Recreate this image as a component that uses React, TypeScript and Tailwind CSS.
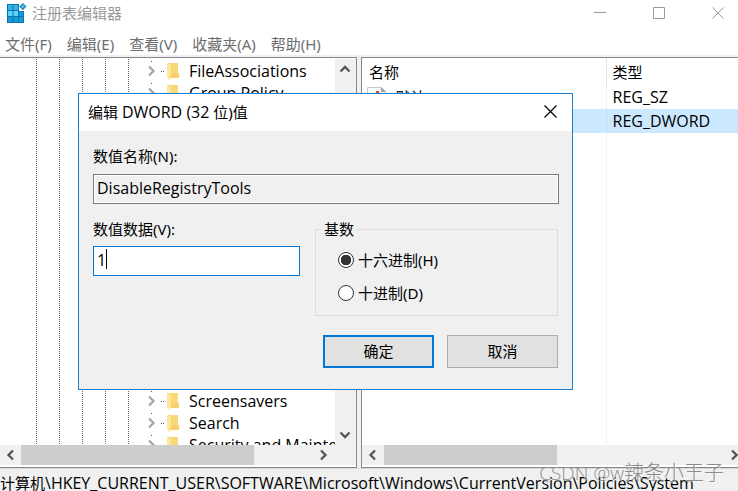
import { useState } from "react";
import type { ReactNode } from "react";

type Direction = "up" | "down" | "left" | "right";

const chevronPaths: Record<Direction, string> = {
  up: "M1.5 7.5 6 3l4.5 4.5",
  down: "M1.5 4.5 6 9l4.5-4.5",
  left: "M8 1.5 3.5 6 8 10.5",
  right: "M4 1.5 8.5 6 4 10.5",
};

function Chevron({ direction, className }: { direction: Direction; className: string }) {
  return (
    <svg viewBox="0 0 12 12" className={`size-3 shrink-0 ${className}`} fill="none" stroke="currentColor" strokeWidth="2.3" aria-hidden="true">
      <path d={chevronPaths[direction]} />
    </svg>
  );
}

function RegistryIcon() {
  return (
    <svg viewBox="0 0 20 20" className="size-5 shrink-0" aria-hidden="true">
      <path d="M0 1h12v7h5v12H0z" fill="#0873ad" />
      <path d="M1 2h4.500v5H1zM6.500 2h4.500v5H6.500z" fill="#35b5e9" />
      <path d="M1 8h4.500v5H1zM6.500 8h4.500v5H6.500z" fill="#5ed3fa" />
      <path d="M1 14h4.500v5H1zM6.500 14h4.500v5H6.500zM12 14h4v5h-4zM12 9h4v4h-4z" fill="#159bd8" />
      <path d="m15.800 0 3.700 3.500-3.700 3.700-3.600-3.700z" fill="#2384b4" />
      <path d="m15.800 1.500 2 2-2 2-2-2z" fill="#53bde8" />
    </svg>
  );
}

function FolderIcon() {
  return (
    <svg viewBox="0 0 12 17" className="h-[17px] w-3 shrink-0" aria-hidden="true">
      <path d="M1 0h10v10h1v5H2z" fill="#f5d06c" />
      <path d="M3 0h8v10H5z" fill="#f8d978" />
      <path d="M0 0l4 2v13l-1 2-3-2z" fill="#ffe799" />
    </svg>
  );
}

function StringValueIcon() {
  return (
    <svg viewBox="0 0 20 20" className="size-5 shrink-0" aria-hidden="true">
      <path d="M.5.500h14l4 4v15H.5z" fill="#fafafa" stroke="#c9c9c9" />
      <path d="M14 0v5h5z" fill="#a3a3a3" />
      <path d="M9 4h3v10H9zM5 9h3v5H5z" fill="#d9492b" />
    </svg>
  );
}

function TreeRow({ name, clipped = false }: { name: string; clipped?: boolean }) {
  return (
    <li className={`flex shrink-0 items-start overflow-hidden ${clipped ? "h-[11px]" : "h-[22px]"}`}>
      <div className="flex h-[22px] items-center">
        <span className="relative flex w-[22px] items-center">
          <Chevron direction="right" className="text-[#a6a6a6]" />
          <span className="absolute -top-[4px] left-[6px] size-px bg-[#555]" />
          <span className="ml-[4px] h-px w-[3px] bg-[repeating-linear-gradient(to_right,#555_0_1px,transparent_1px_2px)]" />
        </span>
        <FolderIcon />
        <span className="ml-[10px] font-['Open_Sans',sans-serif] text-base leading-[22px] whitespace-nowrap">{name}</span>
      </div>
    </li>
  );
}

function HorizontalScrollbar({ start, thumb, children }: { start: string; thumb: string; children?: ReactNode }) {
  return (
    <div className="flex h-5 shrink-0 items-center bg-[#f0f0f0] text-[#555]">
      <button type="button" aria-label="向左滚动" className={`flex shrink-0 items-center justify-center ${start}`}>
        <Chevron direction="left" className="" />
      </button>
      <div className={`h-full shrink-0 bg-[#cdcdcd] ${thumb}`} />
      <div className="flex-1" />
      <button type="button" aria-label="向右滚动" className="flex w-6 shrink-0 items-center justify-center">
        <Chevron direction="right" className="" />
      </button>
      {children}
    </div>
  );
}

function TreePane() {
  return (
    <section className="flex w-[357px] shrink-0 flex-col border-t border-r border-b border-[#828790] bg-white pb-[2px]">
      <div className="flex min-h-0 flex-1 pt-px">
        <div className="flex w-[145px] shrink-0 pl-[36px]">
          {[0, 1, 2, 3, 4].map((level) => (
            <span key={level} className="w-[23px] shrink-0 bg-[repeating-linear-gradient(to_bottom,#666_0_1px,transparent_1px_2px)] bg-size-[1px_100%] bg-no-repeat" />
          ))}
        </div>
        <div className="flex min-w-0 flex-1 flex-col justify-between overflow-hidden pt-px">
          <ul>
            <TreeRow name="FileAssociations" />
            <TreeRow name="Group Policy" />
          </ul>
          <ul>
            <TreeRow name="Screensavers" />
            <TreeRow name="Search" />
            <TreeRow name="Security and Maintenance" clipped />
          </ul>
        </div>
        <div className="flex w-[21px] shrink-0 flex-col items-center justify-between bg-[#f0f0f0] py-[5px] pr-[2px] text-[#555]">
          <button type="button" aria-label="向上滚动"><Chevron direction="up" className="" /></button>
          <button type="button" aria-label="向下滚动"><Chevron direction="down" className="" /></button>
        </div>
      </div>
      <HorizontalScrollbar start="w-[21px]" thumb="w-[233px]">
        <span className="w-[21px]" />
      </HorizontalScrollbar>
    </section>
  );
}

function ValuesPane() {
  return (
    <section className="flex min-w-0 flex-1 flex-col overflow-hidden border-t border-b border-l border-[#828790] bg-white pb-[2px]">
      <div className="flex min-h-0 flex-1">
        <table className="h-full w-full table-fixed border-collapse text-left">
          <thead>
            <tr className="h-[27px]">
              <th className="w-[244px] pl-[7px] font-normal">名称</th>
              <th className="border-l border-[#e0e4ec] pl-[6px] font-normal">类型</th>
            </tr>
          </thead>
          <tbody>
            <tr className="h-6">
              <td className="pl-[5px]">
                <span className="flex items-center gap-1"><StringValueIcon />(默认)</span>
              </td>
              <td className="border-l border-[#eaf1fb] pl-[6px] font-['Open_Sans',sans-serif] text-base leading-5">REG_SZ</td>
            </tr>
            <tr className="h-6 bg-[#cce8ff]">
              <td />
              <td className="border-l border-[#bfdff8] pl-[6px] font-['Open_Sans',sans-serif] text-base leading-5">REG_DWORD</td>
            </tr>
            <tr>
              <td />
              <td className="border-l border-[#eaf1fb]" />
            </tr>
          </tbody>
        </table>
      </div>
      <div className="-mr-2 flex flex-col">
        <HorizontalScrollbar start="w-[22px]" thumb="w-[173px]" />
      </div>
    </section>
  );
}

function EditDialog() {
  const [base, setBase] = useState("hex");
  const [data, setData] = useState("1");
  return (
    <div role="dialog" aria-labelledby="dialog-title" className="absolute top-[93px] left-[78px] w-[495px] border border-[#1a7fd1] bg-[#f0f0f0]">
      <header className="flex h-[37px] items-center justify-between bg-white pr-[15px] pb-[2px] pl-[9px]">
        <h2 id="dialog-title">编辑 <span className="font-['Open_Sans',sans-serif] text-base leading-5">DWORD (32</span> 位)值</h2>
        <button type="button" aria-label="关闭">
          <svg viewBox="0 0 13 13" className="size-[13px]" stroke="black" strokeWidth="1.2" aria-hidden="true"><path d="m.5.500 12 12m0-12-12 12" /></svg>
        </button>
      </header>
      <form className="pt-[14px] pr-[13px] pb-[21px] pl-[14px]" onSubmit={(event) => event.preventDefault()}>
        <label htmlFor="value-name" className="block h-[22px] leading-[22px]">数值名称(N):</label>
        <input id="value-name" readOnly value="DisableRegistryTools" className="mt-[7px] block h-[30px] w-full border border-[#7a7a7a] bg-[#f0f0f0] px-[3px] pb-[2px] font-['Open_Sans',sans-serif] text-base outline-1 -outline-offset-2 outline-white" />
        <div className="mt-[14px] flex gap-[15px] pr-px">
          <div className="w-[207px]">
            <label htmlFor="value-data" className="block h-[22px] leading-[22px]">数值数据(V):</label>
            <div className="relative mt-[6px]">
              <input id="value-data" value={data} onChange={(event) => setData(event.target.value)} className="block h-[30px] w-full border border-[#0078d7] bg-white px-[3px] pb-[2px] font-['Open_Sans',sans-serif] text-base caret-transparent outline-none" />
              <span className="absolute top-[3px] left-[13px] h-5 w-px bg-black" />
            </div>
          </div>
          <fieldset className="h-[98px] flex-1 border border-[#dcdcdc] px-[6px]">
            <legend className="px-[2px] leading-[22px]">基数</legend>
            <div className="flex flex-col gap-[11px] pt-[9px] pl-4">
              {[
                { id: "hex", label: "十六进制(H)" },
                { id: "dec", label: "十进制(D)" },
              ].map((option) => (
                <label key={option.id} className="flex items-center gap-1 leading-[22px]">
                  <input
                    type="radio"
                    name="base"
                    checked={base === option.id}
                    onChange={() => setBase(option.id)}
                    className="size-4 appearance-none rounded-full border border-[#333] bg-white bg-[radial-gradient(circle,#333_5px,transparent_5.500px)] not-checked:bg-none"
                  />
                  {option.label}
                </label>
              ))}
            </div>
          </fieldset>
        </div>
        <div className="mt-[19px] flex justify-end gap-[13px] pr-px">
          <button type="submit" className="h-[33px] w-[111px] border-2 border-[#0078d7] bg-[#e1e1e1] pb-[2px]">确定</button>
          <button type="button" className="h-[33px] w-[111px] border border-[#adadad] bg-[#e1e1e1] pb-[2px]">取消</button>
        </div>
      </form>
    </div>
  );
}

export default function App() {
  return (
    <div className="relative flex h-screen flex-col overflow-hidden bg-white font-['Noto_Sans','Noto_Sans_CJK_SC',sans-serif] text-[15px] leading-5 text-black">
      <header className="flex h-[26px] shrink-0 items-center justify-between pr-[14px] pl-[7px] text-[#999]">
        <div className="flex items-center gap-[5px]">
          <RegistryIcon />
          <h1>注册表编辑器</h1>
        </div>
        <div className="flex gap-[47px]">
          <button type="button" aria-label="最小化"><svg viewBox="0 0 12 12" className="size-3" stroke="#999"><path d="M0 5.500h12" /></svg></button>
          <button type="button" aria-label="最大化"><svg viewBox="0 0 12 12" className="size-3" fill="none" stroke="#999"><path d="M.5.500h11v11H.5z" /></svg></button>
          <button type="button" aria-label="关闭窗口"><svg viewBox="0 0 12 12" className="size-3" stroke="#999"><path d="m.5.500 11 11m0-11-11 11" /></svg></button>
        </div>
      </header>
      <nav className="flex h-[29px] shrink-0 items-center gap-[15px] pt-[7px] pl-[5px] text-[#6d6d6d]">
        {["文件(F)", "编辑(E)", "查看(V)", "收藏夹(A)", "帮助(H)"].map((item) => (
          <button key={item} type="button">{item}</button>
        ))}
      </nav>
      <main className="flex min-h-0 flex-1 gap-1 bg-[#f0f0f0] pt-[2px]">
        <TreePane />
        <ValuesPane />
      </main>
      <footer className="h-[23px] shrink-0 overflow-hidden border-t border-[#dadada] bg-[#f0f0f0] pt-1 whitespace-nowrap">
        计算机<span className="font-['Open_Sans',sans-serif] text-base leading-5">\HKEY_CURRENT_USER\SOFTWARE\Microsoft\Windows\CurrentVersion\Policies\System</span>
      </footer>
      <EditDialog />
      <span className="pointer-events-none absolute right-[14px] bottom-[6px] font-['Open_Sans','Noto_Sans_CJK_SC',sans-serif] text-[20px] leading-6 font-light text-[#8c8c8c] text-shadow-[1px_1px_0_#ffffff80]"><span className="text-[19px]">CSDN @w</span>辣条小王子</span>
    </div>
  );
}
